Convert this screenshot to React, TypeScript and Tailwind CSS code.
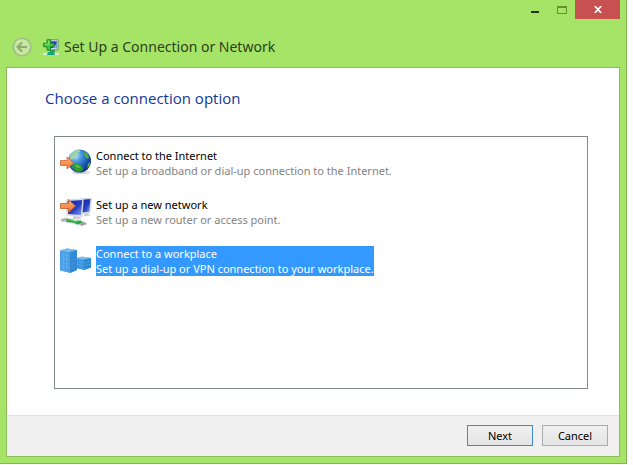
import { useState } from "react";

const GlobeIcon = () => (
  <svg viewBox="0 0 32 32" className="size-8 shrink-0" aria-hidden="true">
    <defs>
      <radialGradient id="globe" cx="0.3" cy="0.25" r="0.8">
        <stop offset="0" stopColor="#cdeafa" />
        <stop offset="0.35" stopColor="#4a9ae0" />
        <stop offset="0.75" stopColor="#1a4fae" />
        <stop offset="1" stopColor="#0f3480" />
      </radialGradient>
      <linearGradient id="arrow" x1="0" y1="0" x2="0" y2="1">
        <stop offset="0" stopColor="#fdb27c" />
        <stop offset="1" stopColor="#f07428" />
      </linearGradient>
    </defs>
    <ellipse cx="21" cy="25.5" rx="9" ry="1.800" fill="#d3d6da" />
    <circle cx="19.500" cy="14" r="11.500" fill="url(#globe)" />
    <path d="M10.500 8c2-3 5-5 8.500-5.300l1.500 1.500-2.500 1.500-.5 2.500-3.500 1.500-1.500 2.500-2.500.3z" fill="#9fd4a0" />
    <path d="M24.500 4.500l3 2 1.500 3-1 2.500-2.500-1.500-1.500-3.500z" fill="#4caf3c" />
    <path d="M12.500 17.500l4-1 4 1.500 3 3-1.500 3-3.500 1c-3-.3-5.500-2.500-6.500-5z" fill="#2f9d33" />
    <path d="M14.500 18.500l3-.5 3 2-2 1z" fill="#62c44c" />
    <path d="M28 16.500l2.300-1-1.300 4-1.800 1.500z" fill="#58b748" />
    <path d="M.5 13.500h6.500v-3.500l6.500 6-6.500 6v-3.500H.5z" fill="url(#arrow)" stroke="#cd6a35" strokeWidth="0.8" strokeLinejoin="round" />
  </svg>
);

const NetworkIcon = () => (
  <svg viewBox="0 0 32 32" className="size-8 shrink-0" aria-hidden="true">
    <defs>
      <linearGradient id="screen" x1="0" y1="0" x2="1" y2="1">
        <stop offset="0" stopColor="#0b1f9c" />
        <stop offset="0.55" stopColor="#2a40c4" />
        <stop offset="1" stopColor="#8fa3ee" />
      </linearGradient>
    </defs>
    <path d="M20 3l11.500-1-1.500 14.500-9 1z" fill="#e6eaf0" stroke="#bcc3ce" strokeWidth="0.6" />
    <path d="M22 3.800l8.500-.8-1.300 12.700-7 .8z" fill="url(#screen)" />
    <path d="M24 17.500l4-.5 2.500 2.500-6 .8z" fill="#ccd1d8" />
    <path d="M6 4l17.500-1-1.500 17.500-15-1.500z" fill="#eef1f6" stroke="#bcc3ce" strokeWidth="0.6" />
    <path d="M7.500 5l14.800-.9-1.300 15.200-13-1.300z" fill="url(#screen)" />
    <path d="M13 20l6 .6 3 2.600-9 .3z" fill="#ccd1d8" />
    <path d="M0 23l6-1.500 19 4 2 2.500-6 2-19-4.500z" fill="#dfe2e6" />
    <path d="M6 22.500l6 1 3 1.500 6-.5 2 2.500-5 1.500-5-2-7-.5z" fill="#2aa83c" />
    <path d="M8 23.500l5 1 4 1.500" fill="none" stroke="#7bd884" strokeWidth="0.8" />
    <path d="M.5 23.500l5-1.500 2 2.500-5 1.500z" fill="#b0b5b9" />
    <path d="M19.500 27.500l4.500-1.500 3 2-5.500 2z" fill="#9aa0a4" />
    <path d="M.5 7.500h8v-4l7 6.500-7 6.500v-4H.5z" fill="url(#arrow)" stroke="#c05a26" strokeWidth="0.8" strokeLinejoin="round" />
  </svg>
);

const WorkplaceIcon = () => (
  <svg viewBox="0 0 32 32" className="size-8 shrink-0" aria-hidden="true">
    <path d="M15 14l7-2 9 1v9.500l-7 2.500-9-2z" fill="#3d9ae2" />
    <path d="M15 13l7-1.500 9 1.500-7 1.800z" fill="#7dbdf0" />
    <path d="M24 14.800l7-1.800v9.500l-7 2.500z" fill="#2f88d4" />
    <path d="M16 16.500l7 1.200M16 19.500l7 1.200M25 17.500l5-1.300M25 20.500l5-1.300" stroke="#58a9e8" strokeWidth="0.6" />
    <path d="M0 5.500l7-2 10 1.500v20l-7 3-10-2.500z" fill="#4a9fe6" />
    <path d="M0 5.500l7-2 10 1.500-7 2.200z" fill="#79bbf0" />
    <path d="M10 7.200l7-2.200v20l-7 3z" fill="#3289d6" />
    <path d="M1 9.500l8 1.500M1 13.500l8 1.500M1 17.500l8 1.500M1 21.500l8 1.500M3.500 7v18.500M6.500 7.500v19" stroke="#66b2ee" strokeWidth="0.6" />
    <path d="M11 11.500l5-1.500M11 15.500l5-1.500M11 19.500l5-1.500M11 23.500l5-1.500" stroke="#4798e0" strokeWidth="0.6" />
  </svg>
);

const WizardIcon = () => (
  <svg viewBox="0 0 16 17" className="h-[17px] w-4 shrink-0" aria-hidden="true">
    <path d="M6 .8h9v10H5z" fill="#dce6ee" stroke="#4f7387" strokeWidth="0.8" />
    <path d="M7 2.300h6.800v6.800H7z" fill="#2746a8" />
    <path d="M10 9l3.800-5v5z" fill="#88a9e6" />
    <path d="M7 11.200h5v2H7z" fill="#1c9b78" />
    <path d="M0 15h16" stroke="#d9ecdf" strokeWidth="2" />
    <path d="M5 13h6l1 3H4z" fill="#18a37c" />
    <path d="M4 .8h3.500v3.500H11v3.500H7.500v3.400H4V7.800H.6V4.300H4z" fill="#3fc93c" stroke="#168424" strokeWidth="0.9" />
    <path d="M5 2h1v3.300H2" fill="none" stroke="#a5f08f" strokeWidth="0.8" />
  </svg>
);

const options = [
  {
    title: "Connect to the Internet",
    description: "Set up a broadband or dial-up connection to the Internet.",
    Icon: GlobeIcon,
  },
  {
    title: "Set up a new network",
    description: "Set up a new router or access point.",
    Icon: NetworkIcon,
  },
  {
    title: "Connect to a workplace",
    description: "Set up a dial-up or VPN connection to your workplace.",
    Icon: WorkplaceIcon,
  },
];

const TitleBar = () => (
  <header>
    <div className="flex h-[19px] justify-end pr-1.5">
      <button aria-label="Minimize" className="flex w-7 items-center justify-center pt-1">
        <span className="h-0.5 w-2 bg-[#22340f]" />
      </button>
      <button aria-label="Maximize" className="flex w-[26px] items-center justify-center">
        <span className="h-2 w-2.5 border border-t-2 border-[#67902f]" />
      </button>
      <button aria-label="Close" className="flex w-[45px] items-center justify-center bg-[#c75050]">
        <svg viewBox="0 0 8 7" className="h-[7px] w-2" aria-hidden="true">
          <path d="M.8 0l6.400 7M7.200 0L.8 7" stroke="#fff" strokeWidth="1.700" />
        </svg>
      </button>
    </div>
    <div className="flex h-12 items-center pt-2 pl-3">
      <button aria-label="Back" className="mr-[11px] shrink-0">
        <svg viewBox="0 0 20 20" className="block size-5" aria-hidden="true">
          <circle cx="10" cy="10" r="8.800" fill="#c4e89d" stroke="#a0b989" strokeWidth="1.600" />
          <path d="M15 10H6M10 5.500L5.500 10l4.500 4.500" fill="none" stroke="#8fa777" strokeWidth="2" />
        </svg>
      </button>
      <WizardIcon />
      <h1 className="ml-[5px] text-[14px] leading-5 text-[#2b3f17]">Set Up a Connection or Network</h1>
    </div>
  </header>
);

const App = () => {
  const [selected, setSelected] = useState(2);

  return (
    <div className="flex min-h-screen bg-[#fcfdfb] pr-1.5 pb-px font-['Noto_Sans','Open_Sans',sans-serif]">
      <div className="flex flex-1 flex-col border-r border-b border-[#86b356] bg-[#a6e468]">
        <TitleBar />
        <main className="mr-1.5 mb-1.5 ml-1.5 flex flex-1 flex-col border border-[#8fbd5e] bg-white">
          <section className="flex flex-1 flex-col pt-5 pr-[31px] pb-[26px] pl-[38px]">
            <h2 id="heading" className="font-['Open_Sans',sans-serif] text-[15px] leading-5 text-[#0f3796]">
              Choose a connection option
            </h2>
            <div
              role="listbox"
              aria-labelledby="heading"
              className="mt-7 ml-[9px] flex flex-1 flex-col items-start gap-[17px] border border-[#828790] pt-2.5 pb-2.5 pl-[5px]"
            >
              {options.map(({ title, description, Icon }, index) => (
                <button
                  key={title}
                  role="option"
                  aria-selected={selected === index}
                  onClick={() => setSelected(index)}
                  className="flex items-center gap-1 text-left text-[11px] leading-[15px]"
                >
                  <Icon />
                  <span className={selected === index ? "bg-[#3399ff] text-white" : "text-black"}>
                    <span className="block">{title}</span>
                    <span className={selected === index ? "block" : "block text-[#838383]"}>
                      {description}
                    </span>
                  </span>
                </button>
              ))}
            </div>
          </section>
          <footer className="flex justify-end gap-[9px] border-t border-[#dfdfdf] bg-[#f0f0f0] pt-[9px] pr-[11px] pb-2.5 text-[11px] leading-[19px] text-black">
            <button className="w-[66px] border border-[#3c8ae0] bg-linear-to-b from-[#f0f0f0] to-[#e5e5e5]">Next</button>
            <button className="w-[66px] border border-[#acacac] bg-linear-to-b from-[#f0f0f0] to-[#e5e5e5]">Cancel</button>
          </footer>
        </main>
      </div>
    </div>
  );
};

export default App;
